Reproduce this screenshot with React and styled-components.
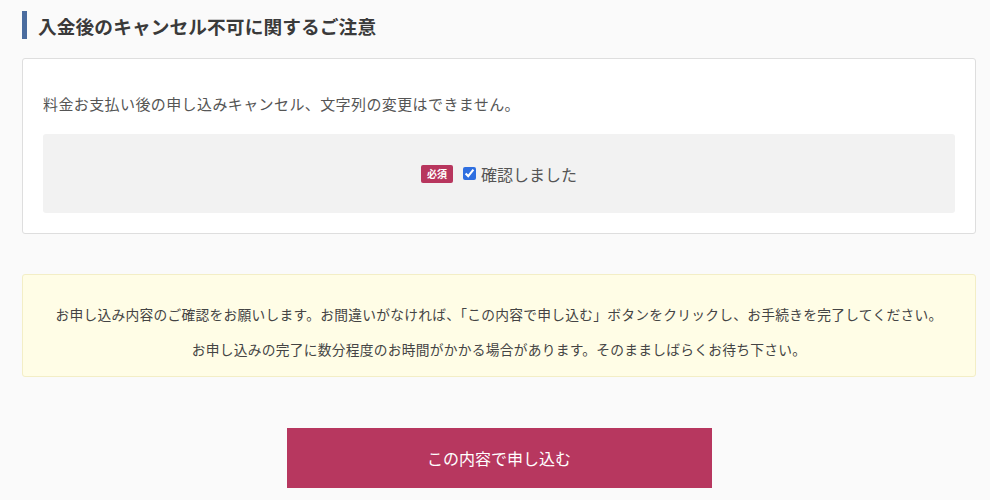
import React from 'react';
import styled, { createGlobalStyle } from 'styled-components';

const GlobalStyle = createGlobalStyle`
    html, body {
        margin: 0;
        padding: 0;
        background: #fafafa;
        font-family: "Noto Sans CJK JP", "Noto Sans", sans-serif;
        color: #444;
    }
`

const Page = styled.div`
    padding: 11px 14px 0 22px;
    display: flex;
    flex-direction: column;
`

const Heading = styled.h2`
    margin: 0 0 19px;
    padding-left: 11px;
    border-left: 5px solid #4a6c9f;
    height: 28px;
    display: flex;
    align-items: center;
    font-size: 18.7px;
    font-weight: 700;
    color: #3a3a3a;
    letter-spacing: 0.1px;
`

const Card = styled.div`
    background: #fff;
    border: 1px solid #dedede;
    border-radius: 3px;
    padding: 33px 20px 20px;
`

const Lead = styled.p`
    margin: 0 0 18px;
    font-size: 15px;
    line-height: 24px;
    letter-spacing: 0.4px;
    color: #555;
`

const ConfirmBox = styled.div`
    background: #f2f2f2;
    border-radius: 3px;
    height: 79px;
    display: flex;
    align-items: center;
    justify-content: center;
`

const Badge = styled.span`
    display: inline-flex;
    align-items: center;
    justify-content: center;
    width: 32px;
    height: 18px;
    border-radius: 2px;
    background: #b8365e;
    color: #fff;
    font-size: 10px;
    font-weight: 700;
    margin-right: 8px;
`

const CheckLabel = styled.label`
    display: inline-flex;
    align-items: center;
    font-size: 16px;
    color: #555;

    input {
        width: 13px;
        height: 13px;
        margin: 0 5px 0 2px;
        accent-color: #2f6fe0;
    }
`

const Notice = styled.div`
    margin-top: 40px;
    background: #fffde6;
    border: 1px solid #f3eec6;
    border-radius: 3px;
    padding: 22px 20px 9px;
    text-align: center;

    p {
        margin: 0;
        font-size: 13.75px;
        line-height: 35px;
        letter-spacing: 0.25px;
        color: #444;
    }
`

const SubmitRow = styled.div`
    display: flex;
    justify-content: center;
    margin-top: 51px;
`

const SubmitButton = styled.button`
    width: 425px;
    height: 60px;
    border: none;
    background: #b7375f;
    color: #fff;
    font-family: inherit;
    font-size: 16px;
    cursor: pointer;
`

const App = () => {
    return (
        <>
            <GlobalStyle />
            <Page>
                <Heading>入金後のキャンセル不可に関するご注意</Heading>
                <Card>
                    <Lead>料金お支払い後の申し込みキャンセル、文字列の変更はできません。</Lead>
                    <ConfirmBox>
                        <Badge>必須</Badge>
                        <CheckLabel>
                            <input type="checkbox" defaultChecked />
                            確認しました
                        </CheckLabel>
                    </ConfirmBox>
                </Card>
                <Notice>
                    <p>お申し込み内容のご確認をお願いします。お間違いがなければ、「この内容で申し込む」ボタンをクリックし、お手続きを完了してください。</p>
                    <p>お申し込みの完了に数分程度のお時間がかかる場合があります。そのまましばらくお待ち下さい。</p>
                </Notice>
                <SubmitRow>
                    <SubmitButton>この内容で申し込む</SubmitButton>
                </SubmitRow>
            </Page>
        </>
    )
}

export default App
